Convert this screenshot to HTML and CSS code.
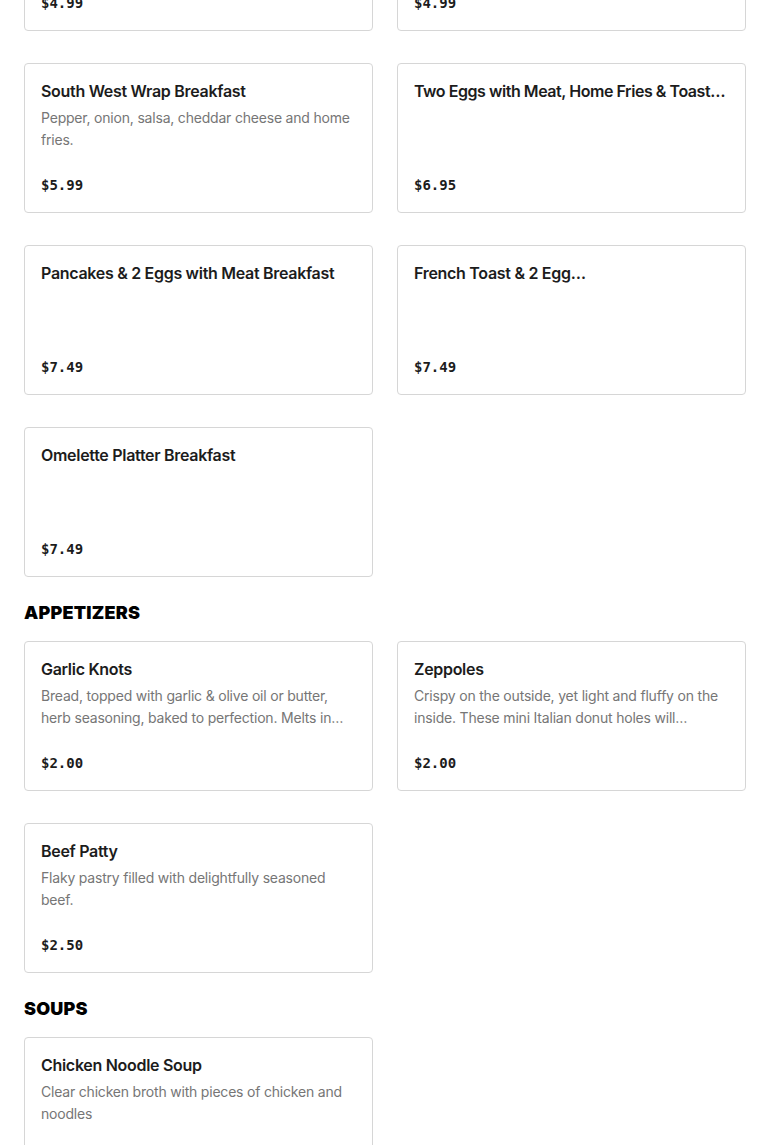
FILE: index.html
```html
<!DOCTYPE html>
<html lang="en">
<head>
<meta charset="utf-8">
<title>Menu</title>
<link rel="stylesheet" href="styles.css">
</head>
<body>
<main class="menu">
  <section class="section section-first">
    <div class="grid">
      <article class="card">
        <h3 class="card-title">Bacon, Egg &amp; Cheese Breakfast</h3>
        <p class="card-desc"></p>
        <div class="card-price">$4.99</div>
      </article>
      <article class="card">
        <h3 class="card-title">Sausage, Egg &amp; Cheese Breakfast</h3>
        <p class="card-desc"></p>
        <div class="card-price">$4.99</div>
      </article>
      <article class="card">
        <h3 class="card-title">South West Wrap Breakfast</h3>
        <p class="card-desc">Pepper, onion, salsa, cheddar cheese and home fries.</p>
        <div class="card-price">$5.99</div>
      </article>
      <article class="card">
        <h3 class="card-title card-title-tight">Two Eggs with Meat, Home Fries &amp; Toast…</h3>
        <p class="card-desc"></p>
        <div class="card-price">$6.95</div>
      </article>
      <article class="card">
        <h3 class="card-title">Pancakes &amp; 2 Eggs with Meat Breakfast</h3>
        <p class="card-desc"></p>
        <div class="card-price">$7.49</div>
      </article>
      <article class="card">
        <h3 class="card-title">French Toast &amp; 2 Egg…</h3>
        <p class="card-desc"></p>
        <div class="card-price">$7.49</div>
      </article>
      <article class="card">
        <h3 class="card-title">Omelette Platter Breakfast</h3>
        <p class="card-desc"></p>
        <div class="card-price">$7.49</div>
      </article>
    </div>
  </section>

  <section class="section">
    <h2 class="section-title">APPETIZERS</h2>
    <div class="grid">
      <article class="card">
        <h3 class="card-title">Garlic Knots</h3>
        <p class="card-desc">Bread, topped with garlic &amp; olive oil or butter, herb seasoning, baked to perfection. Melts in your mouth with every bite.</p>
        <div class="card-price">$2.00</div>
      </article>
      <article class="card">
        <h3 class="card-title">Zeppoles</h3>
        <p class="card-desc">Crispy on the outside, yet light and fluffy on the inside. These mini Italian donut holes will definitely satisfy every sweet tooth.</p>
        <div class="card-price">$2.00</div>
      </article>
      <article class="card">
        <h3 class="card-title">Beef Patty</h3>
        <p class="card-desc">Flaky pastry filled with delightfully seasoned beef.</p>
        <div class="card-price">$2.50</div>
      </article>
    </div>
  </section>

  <section class="section">
    <h2 class="section-title">SOUPS</h2>
    <div class="grid">
      <article class="card">
        <h3 class="card-title">Chicken Noodle Soup</h3>
        <p class="card-desc">Clear chicken broth with pieces of chicken and noodles</p>
        <div class="card-price">$3.99</div>
      </article>
    </div>
  </section>
</main>
</body>
</html>
```
FILE: styles.css
```css
* { box-sizing: border-box; }

html, body {
  margin: 0;
  padding: 0;
  background: #ffffff;
}

body {
  font-family: Inter, "Noto Sans", "Liberation Sans", sans-serif;
  color: #191919;
}

.menu {
  padding: 0 24px;
  margin-top: -119px;
}

.section {
  margin-top: 23px;
}

.section-first {
  margin-top: 0;
}

.section-title {
  margin: 0 0 16px;
  font-family: Inter, "Liberation Sans", sans-serif;
  font-weight: 900;
  font-size: 18px;
  line-height: 25px;
  letter-spacing: 0.2px;
  color: #000000;
}

.grid {
  display: grid;
  grid-template-columns: minmax(0, 1fr) minmax(0, 1fr);
  column-gap: 24px;
  row-gap: 32px;
}

.card {
  display: flex;
  flex-direction: column;
  min-width: 0;
  min-height: 150px;
  padding: 15px 16px;
  border: 1px solid #d6d6d6;
  border-radius: 4px;
  background: #ffffff;
}

.card-title {
  margin: 0;
  font-size: 16px;
  font-weight: 600;
  line-height: 24px;
  letter-spacing: -0.3px;
  color: #1c1c1c;
  white-space: nowrap;
  overflow: hidden;
  text-overflow: ellipsis;
}

.card-title-tight {
  letter-spacing: -0.45px;
}

.card-desc {
  margin: 4px 0 0;
  font-size: 14px;
  font-weight: 400;
  line-height: 22px;
  letter-spacing: -0.2px;
  color: #767676;
  display: -webkit-box;
  -webkit-line-clamp: 2;
  -webkit-box-orient: vertical;
  overflow: hidden;
}

.card-price {
  margin-top: auto;
  padding-top: 8px;
  font-family: "DejaVu Sans Mono", "Liberation Mono", monospace;
  font-weight: 700;
  font-size: 14px;
  line-height: 24px;
  color: #1c1c1c;
}
```
